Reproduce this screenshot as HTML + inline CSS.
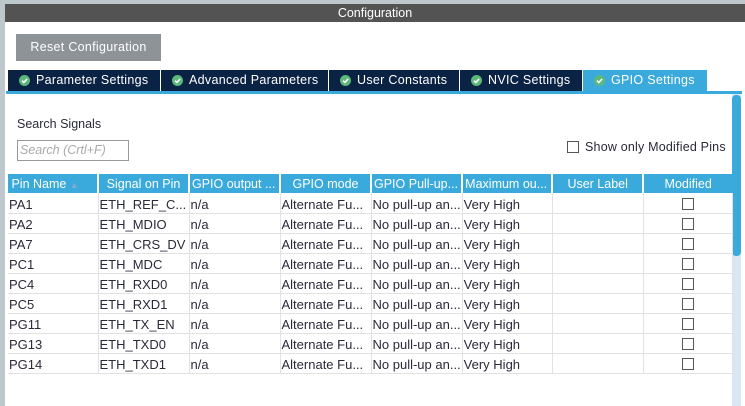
<!DOCTYPE html><html><head><style>
*{margin:0;padding:0;box-sizing:border-box}
body{width:745px;height:406px;background:#bec7cc;font-family:"Liberation Sans",sans-serif;font-size:12.5px;color:#2a2a3a;position:relative;overflow:hidden}
.abs{position:absolute}
#main{left:5px;top:4px;width:740px;height:402px;background:#fff}
#title{left:5px;top:4px;width:740px;height:18px;background:#525352;color:#fff;text-align:center;line-height:19px;font-size:12.5px}
#btn{left:16px;top:34px;width:145px;height:27px;background:#8e9398;color:#fff;text-align:center;line-height:27px;font-size:12.5px;letter-spacing:0.3px}
.tab{top:70px;height:21px;background:#0a2244;color:#fff;line-height:21px;font-size:12.5px;padding-left:11px;white-space:nowrap;letter-spacing:0.3px}
.tab svg{vertical-align:-2px;margin-right:6px}
#line{left:6px;top:91px;width:736px;height:3px;background:#3aa9dc}
#track{left:732px;top:94px;width:9px;height:312px;background:#d8e7f3}
#thumb{left:732px;top:95px;width:9px;height:161px;background:#3aa9dc;border-radius:4px}
.cb{width:12px;height:12px;border:1px solid #555;background:#fff}
table{position:absolute;left:8px;top:174px;border-collapse:collapse;table-layout:fixed;font-size:13px}
th{background:#3aa9dc;color:#fff;font-weight:normal;height:19px;border-left:2px solid #fff;text-align:center;white-space:nowrap;overflow:hidden;padding:0 2px;font-size:12.5px}
th:first-child{border-left:none;text-align:left;padding-left:0}
td{height:20px;border:1px solid #e2e2e2;border-top:none;white-space:nowrap;overflow:hidden;padding:0 1px;line-height:17px;vertical-align:bottom}
td:first-child{border-left:none}
td .cb{margin:0 auto 3px}
</style></head><body>
<div class="abs" id="main"></div>
<div class="abs" id="title">Configuration</div>
<div class="abs" id="btn">Reset Configuration</div>
<div class="abs tab" style="left:8px;width:152px"><svg width="11" height="11" viewBox="0 0 11 11"><circle cx="5.5" cy="5.5" r="5.5" fill="#5cb87a"/><path d="M3 5.7l1.8 1.8 3.3-3.6" stroke="#fff" stroke-width="1.6" fill="none"/></svg>Parameter Settings</div>
<div class="abs tab" style="left:161px;width:167px"><svg width="11" height="11" viewBox="0 0 11 11"><circle cx="5.5" cy="5.5" r="5.5" fill="#5cb87a"/><path d="M3 5.7l1.8 1.8 3.3-3.6" stroke="#fff" stroke-width="1.6" fill="none"/></svg>Advanced Parameters</div>
<div class="abs tab" style="left:329px;width:130px"><svg width="11" height="11" viewBox="0 0 11 11"><circle cx="5.5" cy="5.5" r="5.5" fill="#5cb87a"/><path d="M3 5.7l1.8 1.8 3.3-3.6" stroke="#fff" stroke-width="1.6" fill="none"/></svg>User Constants</div>
<div class="abs tab" style="left:460px;width:122px"><svg width="11" height="11" viewBox="0 0 11 11"><circle cx="5.5" cy="5.5" r="5.5" fill="#5cb87a"/><path d="M3 5.7l1.8 1.8 3.3-3.6" stroke="#fff" stroke-width="1.6" fill="none"/></svg>NVIC Settings</div>
<div class="abs tab" style="left:583px;width:124px;background:#3aa9dc"><svg width="11" height="11" viewBox="0 0 11 11"><circle cx="5.5" cy="5.5" r="5.5" fill="#5cb87a"/><path d="M3 5.7l1.8 1.8 3.3-3.6" stroke="#fff" stroke-width="1.6" fill="none"/></svg>GPIO Settings</div>
<div class="abs" id="line"></div>
<div class="abs" id="track"></div><div class="abs" id="thumb"></div>
<div class="abs" style="left:17px;top:117px">Search Signals</div>
<div class="abs" style="left:17px;top:140px;width:112px;height:21px;border:1px solid #999;color:#aaa;font-style:italic;padding-left:2px;line-height:19px">Search (Crtl+F)</div>
<div class="abs cb" style="left:567px;top:141px"></div>
<div class="abs" style="left:585px;top:140px;letter-spacing:0.2px">Show only Modified Pins</div>
<table>
<colgroup><col style="width:90px"><col style="width:91px"><col style="width:91px"><col style="width:91px"><col style="width:91px"><col style="width:90px"><col style="width:91px"><col style="width:89px"></colgroup>
<tr><th>&nbsp;Pin Name <span style="color:#8ac;font-size:9px">▲</span></th><th>Signal on Pin</th><th style="text-align:left">GPIO output ...</th><th>GPIO mode</th><th style="text-align:left">GPIO Pull-up...</th><th style="text-align:left">Maximum ou...</th><th>User Label</th><th>Modified</th></tr>
<tr><td>PA1</td><td>ETH_REF_C...</td><td>n/a</td><td>Alternate Fu...</td><td>No pull-up an...</td><td>Very High</td><td></td><td><div class="cb"></div></td></tr>
<tr><td>PA2</td><td>ETH_MDIO</td><td>n/a</td><td>Alternate Fu...</td><td>No pull-up an...</td><td>Very High</td><td></td><td><div class="cb"></div></td></tr>
<tr><td>PA7</td><td>ETH_CRS_DV</td><td>n/a</td><td>Alternate Fu...</td><td>No pull-up an...</td><td>Very High</td><td></td><td><div class="cb"></div></td></tr>
<tr><td>PC1</td><td>ETH_MDC</td><td>n/a</td><td>Alternate Fu...</td><td>No pull-up an...</td><td>Very High</td><td></td><td><div class="cb"></div></td></tr>
<tr><td>PC4</td><td>ETH_RXD0</td><td>n/a</td><td>Alternate Fu...</td><td>No pull-up an...</td><td>Very High</td><td></td><td><div class="cb"></div></td></tr>
<tr><td>PC5</td><td>ETH_RXD1</td><td>n/a</td><td>Alternate Fu...</td><td>No pull-up an...</td><td>Very High</td><td></td><td><div class="cb"></div></td></tr>
<tr><td>PG11</td><td>ETH_TX_EN</td><td>n/a</td><td>Alternate Fu...</td><td>No pull-up an...</td><td>Very High</td><td></td><td><div class="cb"></div></td></tr>
<tr><td>PG13</td><td>ETH_TXD0</td><td>n/a</td><td>Alternate Fu...</td><td>No pull-up an...</td><td>Very High</td><td></td><td><div class="cb"></div></td></tr>
<tr><td>PG14</td><td>ETH_TXD1</td><td>n/a</td><td>Alternate Fu...</td><td>No pull-up an...</td><td>Very High</td><td></td><td><div class="cb"></div></td></tr>
</table>
</body></html>
